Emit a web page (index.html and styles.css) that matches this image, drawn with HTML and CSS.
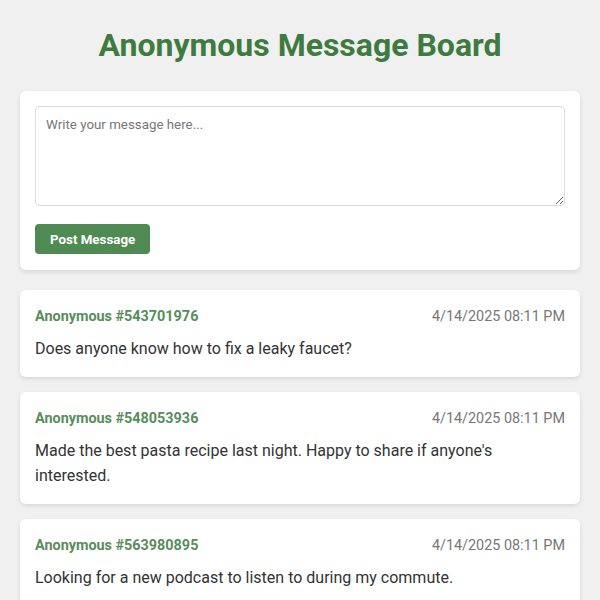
FILE: index.html
```html
<!DOCTYPE html>
<html lang="en">
<head>
<meta charset="utf-8">
<title>Anonymous Message Board</title>
<link rel="stylesheet" href="styles.css">
</head>
<body>
<div class="container">
  <h1 class="title">Anonymous Message Board</h1>
  <form class="card post-form">
    <textarea class="message-input" placeholder="Write your message here..."></textarea>
    <div class="actions"><button type="button" class="post-btn">Post Message</button></div>
  </form>
  <div class="messages">
    <div class="card message">
      <div class="message-header"><span class="author">Anonymous #543701976</span><span class="time">4/14/2025 08:11 PM</span></div>
      <div class="message-body">Does anyone know how to fix a leaky faucet?</div>
    </div>
    <div class="card message">
      <div class="message-header"><span class="author">Anonymous #548053936</span><span class="time">4/14/2025 08:11 PM</span></div>
      <div class="message-body">Made the best pasta recipe last night. Happy to share if anyone's interested.</div>
    </div>
    <div class="card message">
      <div class="message-header"><span class="author">Anonymous #563980895</span><span class="time">4/14/2025 08:11 PM</span></div>
      <div class="message-body">Looking for a new podcast to listen to during my commute.</div>
    </div>
  </div>
</div>
</body>
</html>
```
FILE: styles.css
```css
* { box-sizing: border-box; }
html, body { margin: 0; }
body {
  background: #f0f0f0;
  font-family: Roboto, "Liberation Sans", Arial, sans-serif;
  color: #333;
  line-height: 1.6;
  padding: 20px;
}
.container { max-width: 560px; margin: 0 auto; }
.title {
  margin: 0 0 20px;
  text-align: center;
  color: #3e7b40;
  font-size: 32px;
  font-weight: 700;
  line-height: 1.6;
}
.card {
  background: #fff;
  border-radius: 6px;
  box-shadow: 0 2px 4px rgba(0,0,0,0.1);
  padding: 15px;
}
.post-form {
  margin: 0 0 20px;
  padding-bottom: 16px;
  display: flex;
  flex-direction: column;
  gap: 18px;
}
.message-input {
  display: block;
  width: 100%;
  height: 100px;
  padding: 10px;
  border: 1px solid #ddd;
  border-radius: 4px;
  font-family: Roboto, "Liberation Sans", Arial, sans-serif;
  font-size: 13.333px;
  color: #333;
}
.message-input::placeholder { color: #777; }
.actions { display: flex; }
.post-btn {
  background: #4e8a52;
  color: #fff;
  border: none;
  border-radius: 4px;
  padding: 0 15px;
  height: 30px;
  font-family: Roboto, "Liberation Sans", Arial, sans-serif;
  font-size: 13.333px;
  font-weight: 700;
}
.messages { display: flex; flex-direction: column; gap: 15px; }
.message-header {
  display: flex;
  justify-content: space-between;
  align-items: center;
  font-size: 14.4px;
  line-height: 1.6;
  margin-bottom: 8px;
}
.author { color: #578d5a; font-weight: 700; }
.time { color: #777; }
.message-body { font-size: 16px; line-height: 1.6; }
```
